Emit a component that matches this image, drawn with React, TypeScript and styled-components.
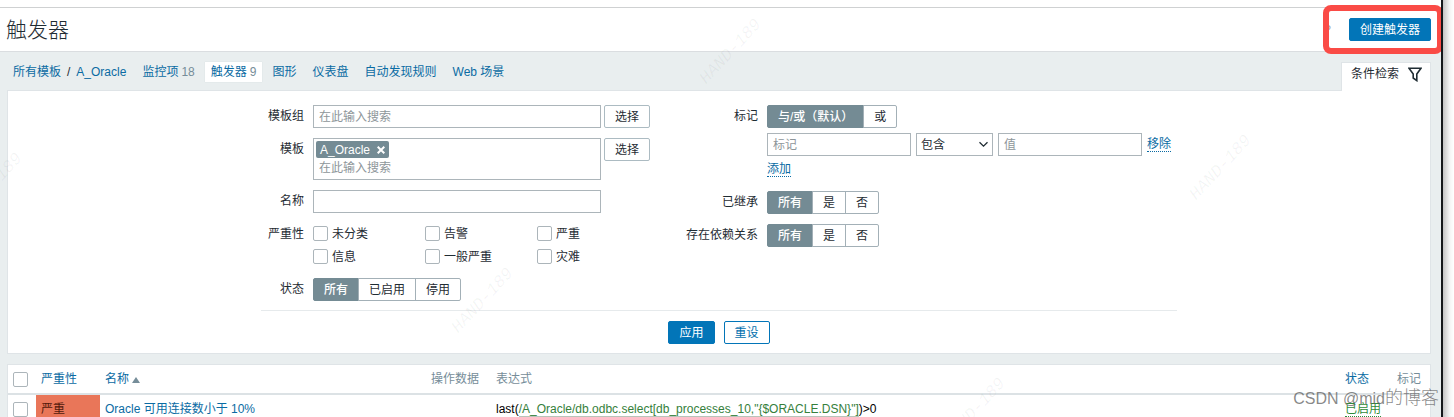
import React from "react";
import styled, { createGlobalStyle, css } from "styled-components";

const GlobalStyle = createGlobalStyle`
  *, *::before, *::after { box-sizing: border-box; }
  body {
    margin: 0;
    background: #fff;
    color: #1f2c33;
    font: 12px/16px "Liberation Sans", "Noto Sans CJK SC", sans-serif;
  }
  button, input, select { font: inherit; color: inherit; margin: 0; }
`;

const Page = styled.div`
  display: flex;
  height: 100vh;
  overflow: hidden;
`;

const Screen = styled.div`
  position: relative;
  flex: 1;
  min-width: 0;
  overflow: hidden;
  background: #e9eeef;
`;

const WindowEdge = styled.div`
  width: 13px;
  border-left: 2px solid #15181b;
  background: linear-gradient(to right, #c4c4c4, #f4f4f4 60%, #fff);
`;

const TopStrip = styled.div`
  height: 8px;
  background: #fff;
  border-bottom: 1px solid #cfd1d2;
`;

const Header = styled.header`
  display: flex;
  align-items: center;
  justify-content: space-between;
  height: 44px;
  padding: 0 10px 0 6px;
  background: #fff;
  border-bottom: 1px solid #dadde0;
`;

const Title = styled.h1`
  margin: 0;
  font-size: 21px;
  line-height: 28px;
  font-weight: 300;
`;

const HeaderActions = styled.div`
  display: flex;
  align-items: center;
  gap: 18px;
`;

const HelpLink = styled.a`
  color: #a3a8ab;
  text-decoration: none;
`;

const Highlighted = styled.div`
  position: relative;
  display: flex;

  &::after {
    content: "";
    position: absolute;
    inset: -13px -12px -13px -26px;
    border: 6px solid #fa4b46;
    border-radius: 8px;
    pointer-events: none;
  }
`;

const Button = styled.button<{ $primary?: boolean; $neutral?: boolean }>`
  height: 23px;
  padding: 0 10px;
  border: 1px solid #0275b8;
  border-radius: 2px;
  background: ${(p) => (p.$primary ? "#0275b8" : "#fff")};
  color: ${(p) => (p.$primary ? "#fff" : "#0270ae")};
  line-height: 20px;
  white-space: nowrap;
  ${(p) =>
    p.$neutral &&
    css`
      border-color: #acbbc2;
      color: #1f2c33;
    `}
`;

const NavBar = styled.div`
  display: flex;
  align-items: flex-end;
  justify-content: space-between;
  height: 38px;
  margin: 0 10px 0 7px;
`;

const Nav = styled.nav`
  display: flex;
  align-items: center;
  gap: 4px;
  height: 36px;
`;

const Crumbs = styled.span`
  display: flex;
  gap: 6px;
  padding: 0 6px;
`;

const Link = styled.a`
  color: #0a6ba3;
  text-decoration: none;
`;

const NavItem = styled(Link)<{ $active?: boolean }>`
  display: flex;
  align-items: center;
  gap: 3px;
  height: 20px;
  padding: 0 6px;
  white-space: nowrap;
  ${(p) =>
    p.$active &&
    css`
      background: #fff;
      box-shadow: 0 0 1px #cdd5d9;
    `}
`;

const Count = styled.span`
  color: #768d99;
`;

const FilterTab = styled.button`
  position: relative;
  z-index: 1;
  display: flex;
  align-items: center;
  gap: 9px;
  height: 29px;
  margin-bottom: -1px;
  padding: 0 8px 6px 9px;
  border: 1px solid #dfe4e7;
  border-bottom: 0;
  background: #fff;
`;

const Panel = styled.section`
  margin: 0 10px 10px 7px;
  background: #fff;
  border: 1px solid #dfe4e7;
`;

const FilterForm = styled.form`
  max-width: 916px;
  margin: 0 auto;
  padding: 14px 0 9px;
`;

const FormColumns = styled.div`
  display: grid;
  grid-template-columns: 389px 1fr;
  column-gap: 24px;
  padding-bottom: 9px;
  border-bottom: 1px solid #e6eaec;
`;

const Fields = styled.div<{ $label: number }>`
  display: grid;
  grid-template-columns: ${(p) => p.$label}px 1fr;
  gap: 10px 9px;
  align-content: start;
`;

const Label = styled.label`
  line-height: 23px;
  text-align: right;
  white-space: nowrap;
`;

const Line = styled.div<{ $gap: number }>`
  display: flex;
  align-items: flex-start;
  gap: ${(p) => p.$gap}px;
`;

const boxed = css`
  border: 1px solid #acb5ba;
  background: #fff;
  &::placeholder { color: #8e969a; opacity: 1; }
`;

const TextInput = styled.input<{ $width: number }>`
  ${boxed}
  width: ${(p) => p.$width}px;
  height: 23px;
  padding: 0 5px;
`;

const MultiSelect = styled.div`
  width: 288px;
  height: 42px;
  padding: 2px;
  border: 1px solid #acb5ba;
`;

const Chip = styled.span`
  display: flex;
  align-items: center;
  gap: 7px;
  width: max-content;
  height: 17px;
  padding: 0 4px;
  border-radius: 2px;
  background: #748b94;
  color: #fff;
`;

const ChipRemove = styled.button`
  display: flex;
  padding: 0;
  border: 0;
  background: none;
`;

const BareInput = styled.input`
  display: block;
  width: 100%;
  height: 20px;
  padding: 0 3px;
  border: 0;
  outline: 0;
  &::placeholder { color: #8e969a; opacity: 1; }
`;

const CheckGrid = styled.div`
  display: grid;
  grid-template-columns: repeat(3, 112px);
  grid-auto-rows: 23px;
  height: 45px;
`;

const CheckLabel = styled.label`
  display: flex;
  align-items: center;
  gap: 4px;
  height: 21px;
`;

const Checkbox = styled.input`
  appearance: none;
  display: block;
  width: 15px;
  height: 15px;
  border: 1px solid #acb5ba;
  border-radius: 2px;
  background: #fff;
`;

const Segments = styled.div`
  display: flex;
  height: 23px;
`;

const Segment = styled.label`
  display: flex;
  align-items: center;
  padding: 0 10px;
  border: 1px solid #a3b0b7;
  white-space: nowrap;

  & + & { margin-left: -1px; }
  &:first-child { border-radius: 2px 0 0 2px; }
  &:last-child { border-radius: 0 2px 2px 0; }
  &:has(input:checked) {
    background: #748b94;
    border-color: #748b94;
    color: #fff;
    font-weight: 500;
  }
`;

const SegmentRadio = styled.input`
  appearance: none;
  width: 0;
  height: 0;
`;

const Stack = styled.div`
  display: flex;
  flex-direction: column;
  align-items: flex-start;
  gap: 5px;
`;

const SelectBox = styled.div`
  position: relative;
  width: 77px;

  svg {
    position: absolute;
    top: 8px;
    right: 5px;
    pointer-events: none;
  }
`;

const Select = styled.select`
  ${boxed}
  appearance: none;
  width: 100%;
  height: 23px;
  padding: 0 4px;
  border-radius: 0;
`;

const DottedLink = styled.a<{ $green?: boolean }>`
  color: ${(p) => (p.$green ? "#2f8a3a" : "#0a6ba3")};
  border-bottom: 1px dotted currentColor;
  text-decoration: none;
  line-height: 15px;
`;

const LinkLine = styled.div`
  height: 20px;
`;

const RemoveCell = styled.div`
  padding-top: 3px;
`;

const FormButtons = styled.div`
  display: flex;
  justify-content: center;
  gap: 9px;
  padding-top: 10px;
`;

const Table = styled.table`
  width: 100%;
  table-layout: fixed;
  border-collapse: collapse;
`;

const Th = styled.th<{ $w?: number }>`
  width: ${(p) => (p.$w ? `${p.$w}px` : "auto")};
  height: 29px;
  padding: 0 5px;
  border-bottom: 2px solid #dce2e5;
  color: #768d99;
  font-weight: 400;
  text-align: left;
  white-space: nowrap;
`;

const Td = styled.td<{ $severe?: boolean }>`
  height: 29px;
  padding: 0 5px;
  white-space: nowrap;
  background: ${(p) => (p.$severe ? "#e97659" : "none")};
  color: ${(p) => (p.$severe ? "#52190b" : "#000")};
`;

const SortArrow = styled.span`
  display: inline-block;
  margin-left: 3px;
  border: 4px solid transparent;
  border-top: 0;
  border-bottom: 6px solid #768d99;
`;

const Expression = styled.a`
  color: #35803b;
  text-decoration: none;
  border-bottom: 1px solid #b9c4ba;
`;

const Watermark = styled.span<{ $x: number; $y: number }>`
  position: absolute;
  left: ${(p) => p.$x}px;
  top: ${(p) => p.$y}px;
  z-index: 2;
  transform: translate(-50%, -50%) rotate(-47deg);
  color: rgba(60, 70, 75, 0.06);
  font: italic 17px/20px "Liberation Mono", monospace;
  pointer-events: none;
`;

const Signature = styled.span`
  position: absolute;
  right: 2px;
  bottom: 6px;
  z-index: 2;
  color: rgba(90, 90, 90, 0.72);
  font-size: 16px;
  line-height: 24px;
  white-space: nowrap;
  pointer-events: none;
`;

const SignatureTail = styled.span`
  font-size: 18px;
  font-weight: 300;
`;

function SegmentGroup({ name, label, options }: { name: string; label: string; options: string[] }) {
  return (
    <Segments role="radiogroup" aria-label={label}>
      {options.map((option, i) => (
        <Segment key={option}>
          <SegmentRadio type="radio" name={name} defaultChecked={i === 0} />
          {option}
        </Segment>
      ))}
    </Segments>
  );
}

const severities = ["未分类", "告警", "严重", "信息", "一般严重", "灾难"];
const tabs = [
  { name: "监控项", count: 18 },
  { name: "触发器", count: 9, active: true },
  { name: "图形" },
  { name: "仪表盘" },
  { name: "自动发现规则" },
  { name: "Web 场景" },
];
const stamps = [
  [731, 52],
  [1221, 168],
  [483, 301],
  [-8, 186],
  [975, 411],
];

export default function App() {
  return (
    <Page>
      <GlobalStyle />
      <Screen>
        <TopStrip />
        <Header>
          <Title>触发器</Title>
          <HeaderActions>
            <HelpLink href="#help" aria-label="帮助">?</HelpLink>
            <Highlighted>
              <Button $primary type="button">创建触发器</Button>
            </Highlighted>
          </HeaderActions>
        </Header>

        <NavBar>
          <Nav>
            <Crumbs>
              <Link href="#templates">所有模板</Link>
              <span>/</span>
              <Link href="#oracle">A_Oracle</Link>
            </Crumbs>
            {tabs.map((t) => (
              <NavItem key={t.name} href="#tab" $active={t.active}>
                {t.name}
                {t.count && <Count>{t.count}</Count>}
              </NavItem>
            ))}
          </Nav>
          <FilterTab type="button">
            条件检索
            <svg width="14" height="15" viewBox="0 0 14 15" fill="none" stroke="#1f2c33" strokeWidth="1.6">
              <path d="M1 1.3h12L8.800 7v6.600L5.200 11V7z" />
            </svg>
          </FilterTab>
        </NavBar>

        <Panel>
          <FilterForm onSubmit={(e) => e.preventDefault()}>
            <FormColumns>
              <Fields $label={43}>
                <Label htmlFor="groups">模板组</Label>
                <Line $gap={3}>
                  <TextInput id="groups" $width={288} placeholder="在此输入搜索" />
                  <Button type="button" $neutral>选择</Button>
                </Line>
                <Label htmlFor="templates">模板</Label>
                <Line $gap={3}>
                  <MultiSelect>
                    <Chip>
                      A_Oracle
                      <ChipRemove type="button" aria-label="移除 A_Oracle">
                        <svg width="8" height="8" viewBox="0 0 8 8" stroke="#fff" strokeWidth="2">
                          <path d="M0.700 0.700l6.600 6.600M7.300 0.700L0.700 7.300" />
                        </svg>
                      </ChipRemove>
                    </Chip>
                    <BareInput id="templates" placeholder="在此输入搜索" />
                  </MultiSelect>
                  <Button type="button" $neutral>选择</Button>
                </Line>
                <Label htmlFor="name">名称</Label>
                <TextInput id="name" $width={288} />
                <Label as="span">严重性</Label>
                <CheckGrid>
                  {severities.map((s) => (
                    <CheckLabel key={s}>
                      <Checkbox type="checkbox" />
                      {s}
                    </CheckLabel>
                  ))}
                </CheckGrid>
                <Label as="span">状态</Label>
                <SegmentGroup name="status" label="状态" options={["所有", "已启用", "停用"]} />
              </Fields>

              <Fields $label={84}>
                <Label as="span">标记</Label>
                <Stack>
                  <SegmentGroup name="evaltype" label="标记" options={["与/或（默认）", "或"]} />
                  <Line $gap={5}>
                    <TextInput $width={144} placeholder="标记" aria-label="标记" />
                    <SelectBox>
                      <Select aria-label="运算符">
                        <option>包含</option>
                      </Select>
                      <svg width="9" height="7" viewBox="0 0 9 7" fill="none" stroke="#1f2c33" strokeWidth="1.3">
                        <path d="M0.500 1.200L4.500 5.200l4-4" />
                      </svg>
                    </SelectBox>
                    <TextInput $width={144} placeholder="值" aria-label="值" />
                    <RemoveCell>
                      <DottedLink href="#remove">移除</DottedLink>
                    </RemoveCell>
                  </Line>
                  <LinkLine>
                    <DottedLink href="#add">添加</DottedLink>
                  </LinkLine>
                </Stack>
                <Label as="span">已继承</Label>
                <SegmentGroup name="inherited" label="已继承" options={["所有", "是", "否"]} />
                <Label as="span">存在依赖关系</Label>
                <SegmentGroup name="dependent" label="存在依赖关系" options={["所有", "是", "否"]} />
              </Fields>
            </FormColumns>
            <FormButtons>
              <Button $primary type="submit">应用</Button>
              <Button type="reset">重设</Button>
            </FormButtons>
          </FilterForm>
        </Panel>

        <Panel>
          <Table>
            <thead>
              <tr>
                <Th $w={28}><Checkbox type="checkbox" aria-label="全选" /></Th>
                <Th $w={64}><Link href="#severity">严重性</Link></Th>
                <Th $w={326}><Link href="#name">名称<SortArrow /></Link></Th>
                <Th $w={65}>操作数据</Th>
                <Th>表达式</Th>
                <Th $w={52}><Link href="#status">状态</Link></Th>
                <Th $w={38}>标记</Th>
              </tr>
            </thead>
            <tbody>
              <tr>
                <Td><Checkbox type="checkbox" aria-label="选择触发器" /></Td>
                <Td $severe>严重</Td>
                <Td><Link href="#trigger">Oracle 可用连接数小于 10%</Link></Td>
                <Td />
                <Td>
                  last(
                  <Expression href="#item">/A_Oracle/db.odbc.select[db_processes_10,"{"{$ORACLE.DSN}"}"]</Expression>
                  )&gt;0
                </Td>
                <Td><DottedLink $green href="#enabled">已启用</DottedLink></Td>
                <Td />
              </tr>
            </tbody>
          </Table>
        </Panel>

        {stamps.map(([x, y]) => (
          <Watermark key={x} $x={x} $y={y} aria-hidden>HAND-189</Watermark>
        ))}
        <Signature>
          CSDN @mid<SignatureTail>的博客</SignatureTail>
        </Signature>
      </Screen>
      <WindowEdge />
    </Page>
  );
}
